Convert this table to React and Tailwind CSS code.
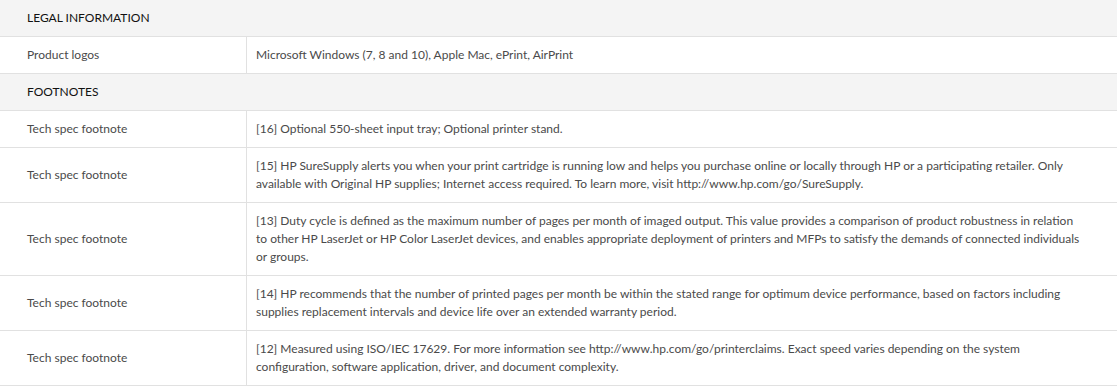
const sections = [
  {
    title: 'LEGAL INFORMATION',
    rows: [
      { label: 'Product logos', value: 'Microsoft Windows (7, 8 and 10), Apple Mac, ePrint, AirPrint' },
    ],
  },
  {
    title: 'FOOTNOTES',
    rows: [
      { label: 'Tech spec footnote', value: '[16] Optional 550-sheet input tray; Optional printer stand.' },
      { label: 'Tech spec footnote', value: '[15] HP SureSupply alerts you when your print cartridge is running low and helps you purchase online or locally through HP or a participating retailer. Only available with Original HP supplies; Internet access required. To learn more, visit http://www.hp.com/go/SureSupply.' },
      // line break kept where the original page wraps it
      { label: 'Tech spec footnote', value: '[13] Duty cycle is defined as the maximum number of pages per month of imaged output. This value provides a comparison of product robustness in relation\nto other HP LaserJet or HP Color LaserJet devices, and enables appropriate deployment of printers and MFPs to satisfy the demands of connected individuals\nor groups.' },
      { label: 'Tech spec footnote', value: '[14] HP recommends that the number of printed pages per month be within the stated range for optimum device performance, based on factors including supplies replacement intervals and device life over an extended warranty period.' },
      { label: 'Tech spec footnote', value: '[12] Measured using ISO/IEC 17629. For more information see http://www.hp.com/go/printerclaims. Exact speed varies depending on the system configuration, software application, driver, and document complexity.' },
    ],
  },
]

export default function App() {
  return (
    <div className="w-[1117px] bg-white font-['Lato',sans-serif] text-[12px] leading-[18px]">
      {sections.map(section => (
        <div key={section.title}>
          {/* section heading */}
          <div className="bg-[#f4f4f4] border-b border-[#e1e1e1] pl-[27px] py-[9px] text-[#111]">
            {section.title}
          </div>
          {section.rows.map((row, i) => (
            <div key={i} className="flex border-b border-[#e1e1e1] text-[#4a4a4a]">
              <div className="w-[247px] shrink-0 border-r border-[#e1e1e1] pl-[27px] py-[9px] flex items-center">
                {row.label}
              </div>
              <div className="flex-1 pl-[9px] pr-[24px] py-[9px] whitespace-pre-line">
                {row.value}
              </div>
            </div>
          ))}
        </div>
      ))}
    </div>
  )
}
